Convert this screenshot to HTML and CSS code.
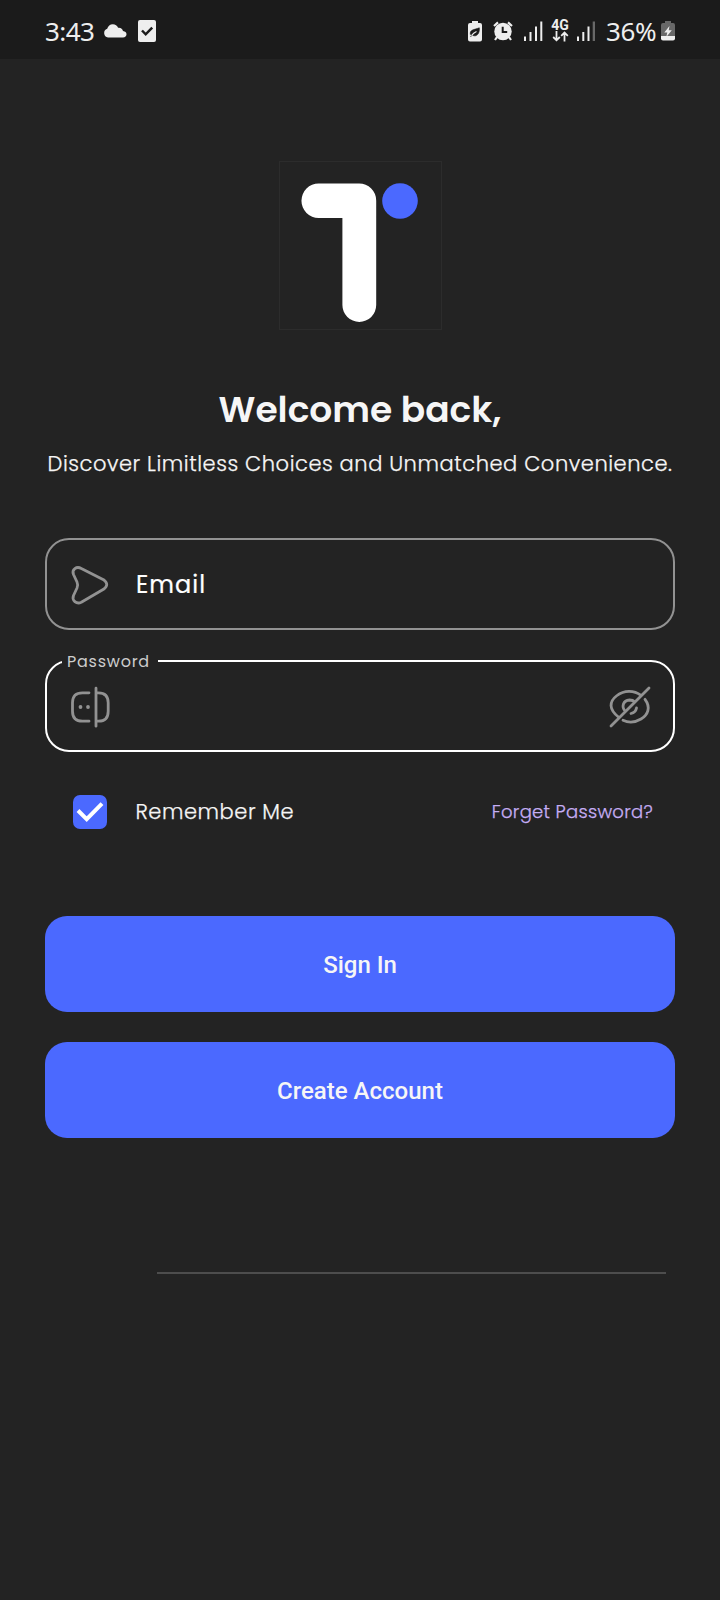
FILE: index.html
```html
<!DOCTYPE html>
<html lang="en">
<head>
<meta charset="utf-8">
<title>Sign in</title>
<link rel="stylesheet" href="styles.css">
</head>
<body>
<header class="status">
  <span class="clock">3:43</span>
  <svg class="cloud" width="24" height="14" viewBox="0 0 24 14"><path d="M5 13.500a4.500 4.500 0 0 1-.8-8.700C5 2.200 7 .3 9.800.3c2.500 0 4.400 1.300 5.300 3.500 2.800-.3 4.400 1 4.900 3.200 2.200.3 3.500 1.500 3.500 3.300 0 1.900-1.300 3.200-3.500 3.200z"/></svg>
  <svg class="task" width="18" height="22" viewBox="0 0 18 22"><rect width="18" height="22" rx="2"/><path class="cut" d="M4 10.500l3.700 3.800 6.500-6.600"/></svg>
  <span class="spacer"></span>
  <svg class="leaf" width="14" height="21" viewBox="0 0 14 21"><path d="M4 0h6v2h2q2 0 2 2v14.500q0 2-2 2H2q-2 0-2-2V4q0-2 2-2h2z"/><path d="M2.300 13.500C1.800 8.500 5.500 9 11.300 6.800c.7 6-3 9.300-6.500 7.600M2.500 16c1.500-3 3-4.200 5.500-5.500" fill="#1b1b1b" stroke="#1b1b1b" stroke-width=".6"/><path d="M3.500 14.600c1.300-1.800 2.800-3 5-4" fill="none" stroke="#eee" stroke-width="1.100"/></svg>
  <svg class="alarm" width="20" height="20" viewBox="0 0 20 20"><circle cx="10" cy="10.500" r="8.700"/><path d="M1 5l4-3.600M19 5l-4-3.600M4 16l-2 3M16 16l2 3" stroke="#eee" stroke-width="2.200"/><path d="M9.700 5.800v5.200h4.500" fill="none" stroke="#1b1b1b" stroke-width="2"/></svg>
  <svg class="bars" width="19" height="20" viewBox="0 0 19 20"><path d="M0 15.500h2V20H0zM5.500 11h2v9h-2zM11 5.500h2V20h-2zM16.300.5h2V20h-2z"/></svg>
  <span class="net"><b>4G</b><svg width="17" height="11" viewBox="0 0 17 11"><path d="M4.500 0v9M1.200 6l3.300 3.300L7.800 6M12.500 10.500v-9M9.200 4.800l3.300-3.300 3.300 3.300" fill="none" stroke="#eee" stroke-width="1.800"/></svg></span>
  <svg class="bars" width="19" height="20" viewBox="0 0 19 20"><path d="M0 15.500h2V20H0zM5.300 11h2v9h-2zM10.500 5.500h2V20h-2z"/><path d="M15.700.5h2.300V20h-2.300z" fill="#686868"/></svg>
  <span class="pct">36%</span>
  <svg class="batt" width="14" height="20" viewBox="0 0 14 20"><path fill="#686868" d="M4 0h6v2h2q2 0 2 2v11H0V4q0-2 2-2h2z"/><path d="M0 15h14v2.500q0 2-2 2H2q-2 0-2-2z"/><path d="M8.500 5L3.300 11.600h3L5.300 16l5.500-6.800H7.700z"/></svg>
</header>
<main class="page">
  <svg class="logo" width="164" height="170" viewBox="0 0 164 170" role="img" aria-label="T logo"><rect x=".5" y=".5" width="162" height="168" fill="none" stroke="#2c2c2c"/><path fill="#fff" d="M39.700 22.500H80a17 17 0 0 1 17.200 17.200V144a16.900 16.900 0 0 1-33.800 0V57H39.700a17.250 17.250 0 0 1 0-34.500z"/><circle cx="121" cy="40" r="17.800" fill="#4b69ff"/></svg>
  <h1>Welcome back,</h1>
  <p class="lead">Discover Limitless Choices and Unmatched Convenience.</p>
  <form>
    <div class="field">
      <svg width="40" height="42" viewBox="0 0 40 42"><path d="M11.300 4.500L33.500 15.700q6.500 4.800 0 9.600L11.300 38.300C6.500 40.500 1.500 36.500 3.500 31.500L7 24q1.300-3 0-6L3.500 10.500C1.500 5.500 6.500 1.800 11.300 4.500z"/></svg>
      <span class="email">Email</span>
    </div>
    <div class="field active">
      <span class="label"><span>Password</span></span>
      <svg width="40" height="42" viewBox="0 0 40 42"><path d="M19 6.800h-6.500Q2.500 6.800 2.500 16.800v8.400q0 10 10 10H19M26 2.200v38M26 6.800h2.500q9.700 0 9.700 10v8.400q0 10-9.700 10H26"/><g class="dots"><circle cx="10.500" cy="21" r="1.900"/><circle cx="18" cy="21" r="1.900"/></g></svg>
      <svg class="eye" width="42" height="42" viewBox="0 0 42 42"><path d="M2 40L40 2M10 31.500C-.5 23.500 0 15.500 8 9.500 15 4 25 4 32 9.300M36 13.300c6 8 3 15.500-4 19.700-6 3.600-13 3.600-18 1.300M16.500 25.500c-4.500-4.500-2.500-11 4-11.500 2.300 0 4 .6 5.500 2M27.500 22q-.8 4.500-5.500 5.500"/></svg>
    </div>
    <div class="options">
      <svg class="check" width="34" height="34" viewBox="0 0 34 34"><rect width="34" height="34" rx="7"/><path d="M5 15.500l8.700 8.600L29 8.700"/></svg>
      <span class="remember">Remember Me</span>
      <a class="forget">Forget Password?</a>
    </div>
    <button type="button" class="signin">Sign In</button>
    <button type="button" class="create">Create Account</button>
  </form>
  <hr>
</main>
</body>
</html>
```
FILE: styles.css
```css
* { box-sizing: border-box; }
body { margin: 0; width: 720px; min-height: 1600px; background: #232323; color: #f6f6f6; font-family: Poppins, Inter, sans-serif; }
svg { display: block; flex: none; }
.status { height: 59px; background: #1b1b1b; display: flex; align-items: center; padding: 3px 45px 0; fill: #eee; color: #eee; font-family: "Noto Sans", sans-serif; }
.clock, .pct { font-size: 26px; line-height: 36px; white-space: nowrap; flex: none; }
.clock { width: 58px; letter-spacing: -.6px; }
.cut { fill: none; stroke: #1b1b1b; stroke-width: 2.500; }
.task { margin-left: 11px; }
.spacer { flex: 1; }
.alarm { margin-left: 11px; }
.bars { margin-left: 11px; }
.net { margin-left: 8px; width: 18px; height: 22px; display: flex; flex-direction: column; align-items: center; }
.net b { font: 700 14px/11px Roboto, sans-serif; }
.net + .bars { margin-left: 8px; }
.pct { width: 55px; margin-left: 10px; letter-spacing: -.4px; }
.page { padding: 102px 45px 0; display: flex; flex-direction: column; }
.logo { margin-left: 234px; }
h1 { margin: 54px 0 0; font-size: 36px; line-height: 50px; font-weight: 600; text-align: center; white-space: nowrap; }
.lead { margin: 14px 0 0; font-size: 21px; line-height: 30px; font-weight: 300; letter-spacing: .55px; text-align: center; white-space: nowrap; }
.lead, .remember, .forget { -webkit-text-stroke: .25px currentColor; }
form { margin-top: 59px; display: flex; flex-direction: column; }
.field { position: relative; height: 92px; border: 2px solid #929292; border-radius: 24px; display: flex; align-items: center; padding: 2px 22px 0 23px; }
.field svg { fill: none; stroke: #929292; stroke-width: 2.800; stroke-linecap: round; stroke-linejoin: round; }
.field .dots { fill: #929292; stroke: none; }
.email { margin-left: 26px; font-size: 24px; line-height: 36px; letter-spacing: 1px; color: #fff; -webkit-text-stroke: .2px currentColor; }
.active { margin-top: 30px; border-color: #fff; }
.label { position: absolute; left: 15px; top: -12px; width: 96px; padding-left: 5px; background: #232323; color: #ccc; font-size: 16px; line-height: 24px; letter-spacing: .75px; }
.eye { margin-left: auto; }
.options { height: 34px; margin-top: 43px; padding: 0 22px 0 28px; display: flex; align-items: center; }
.check rect { fill: #4b69ff; }
.check path { fill: none; stroke: #fff; stroke-width: 4; }
.remember { margin-left: 28.500px; margin-top: -1px; font-size: 21px; font-weight: 300; letter-spacing: .54px; white-space: nowrap; }
.forget { margin-left: auto; margin-top: -1px; font-size: 18px; font-weight: 300; letter-spacing: .3px; color: #c6aef5; white-space: nowrap; }
button { height: 96px; border: 0; border-radius: 22px; background: #4b69ff; color: #f6f6f6; font: 500 24px/36px Roboto, sans-serif; padding: 1px 0 0; }
.signin { margin-top: 87px; }
.create { margin-top: 30px; }
hr { width: 509px; height: 2px; margin: 134px 0 0 112px; border: 0; background: #4d4d4d; }
```
